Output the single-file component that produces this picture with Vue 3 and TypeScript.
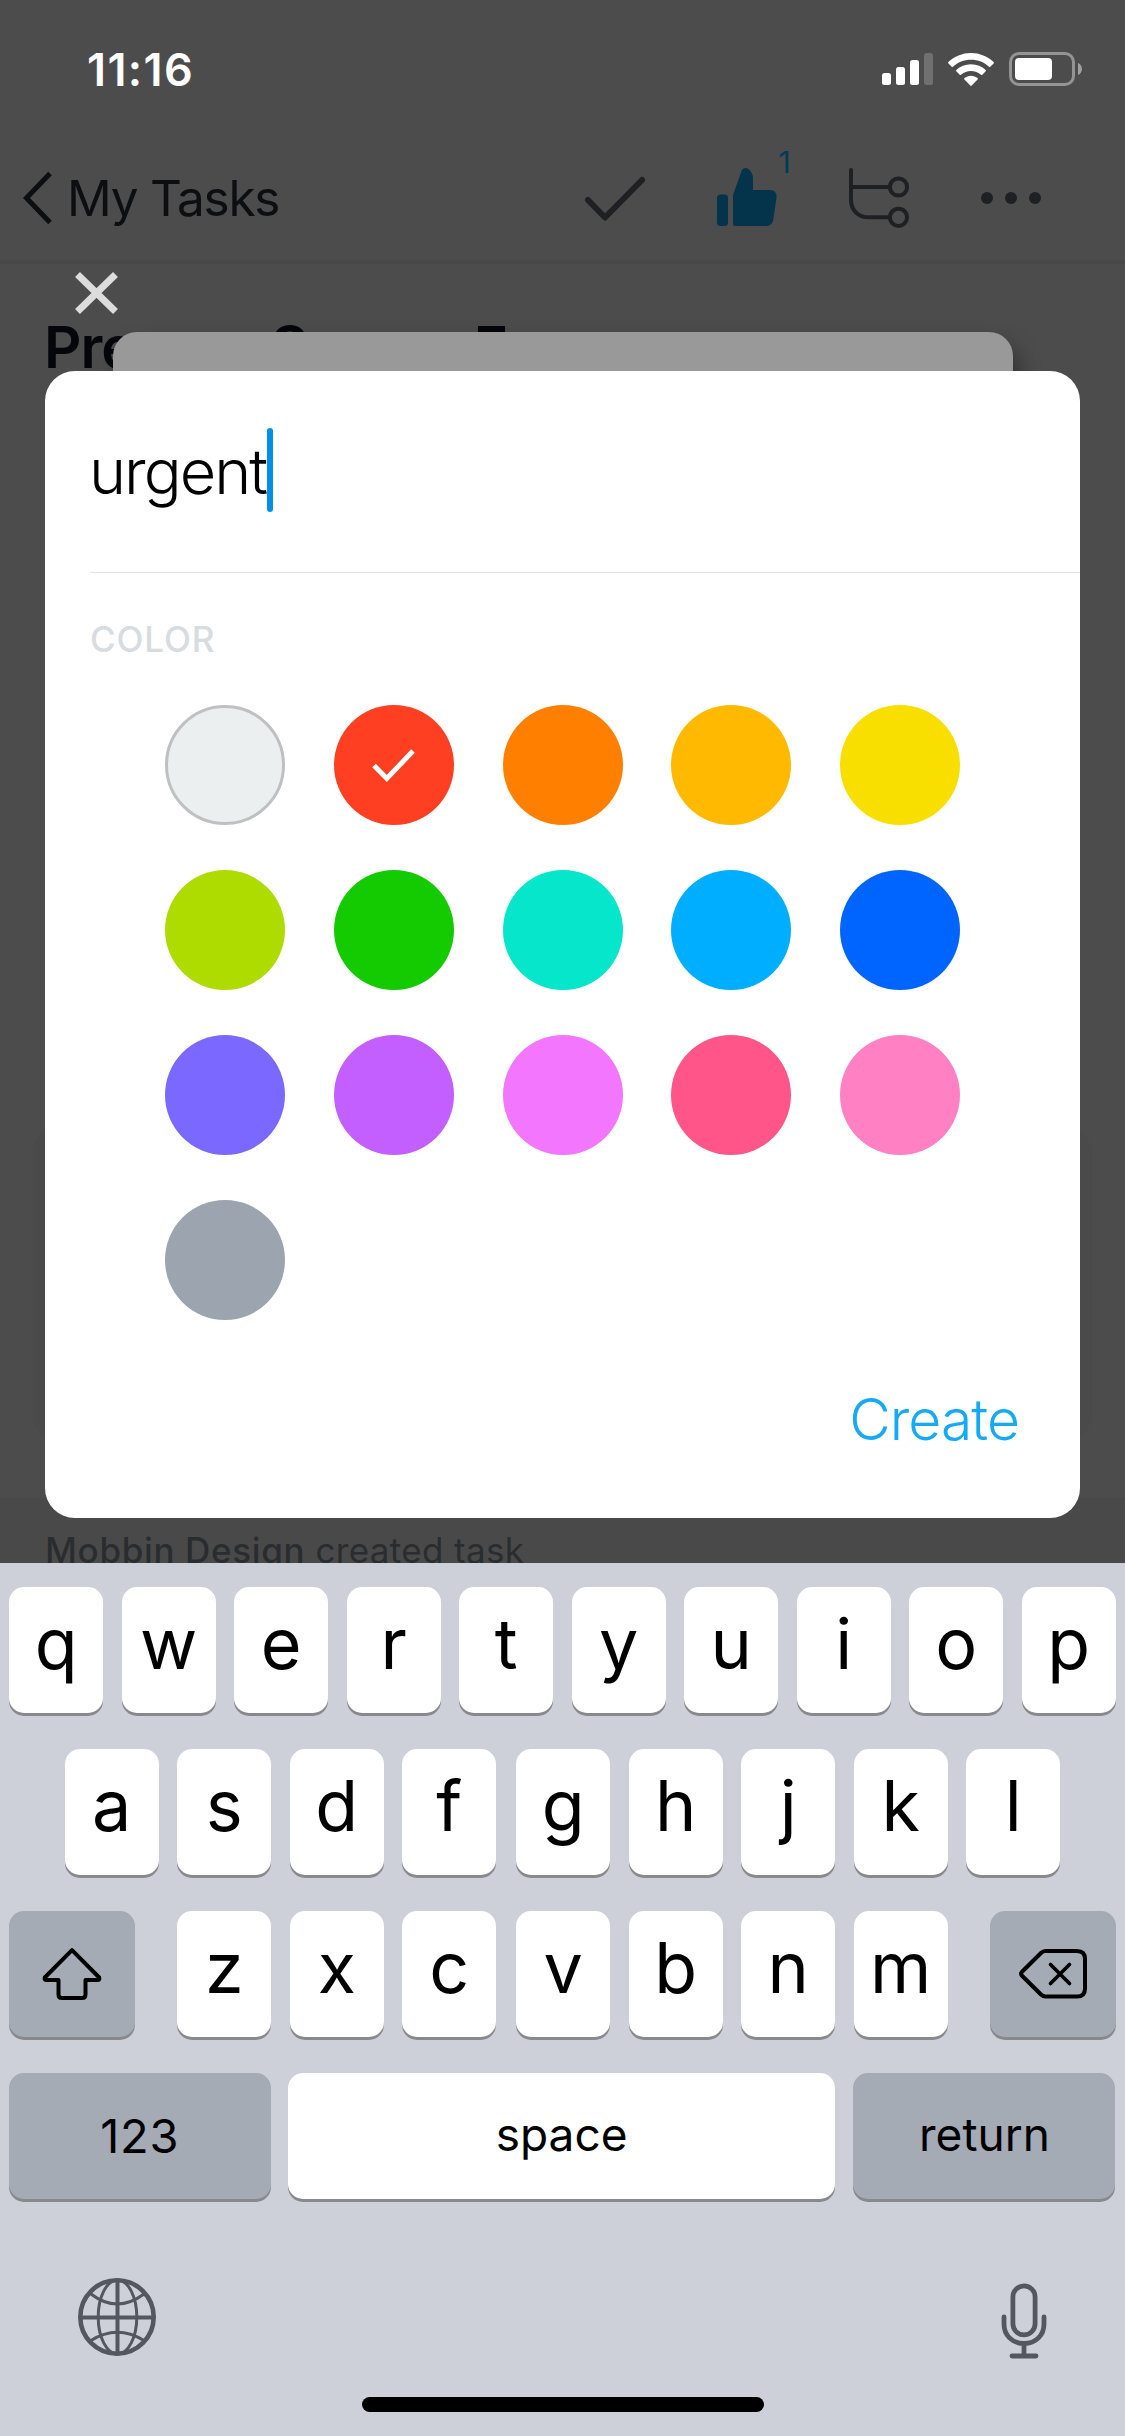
<script setup lang="ts">
interface Swatch {
  name: string
  color: string
  outlined?: boolean
}

const swatches: Swatch[] = [
  { name: 'none', color: '#ebeff0', outlined: true },
  { name: 'red', color: '#ff3f21' },
  { name: 'orange', color: '#ff8000' },
  { name: 'amber', color: '#ffba00' },
  { name: 'yellow', color: '#f8df00' },
  { name: 'lime', color: '#aedb00' },
  { name: 'green', color: '#13cb00' },
  { name: 'teal', color: '#06e6ca' },
  { name: 'sky', color: '#00aeff' },
  { name: 'blue', color: '#0064ff' },
  { name: 'indigo', color: '#7a68ff' },
  { name: 'purple', color: '#c35fff' },
  { name: 'orchid', color: '#f376ff' },
  { name: 'rose', color: '#ff5588' },
  { name: 'pink', color: '#ff80c3' },
  { name: 'gray', color: '#9ca4b0' },
]
const selected = 'red'

const topRow = 'qwertyuiop'.split('')
const homeRow = 'asdfghjkl'.split('')
const bottomRow = 'zxcvbnm'.split('')
</script>

<template>
  <div class="screen">
    <div class="page">
      <header class="status">
        <span class="time">11:16</span>
        <svg class="signal" width="51" height="32" viewBox="0 0 51 32" fill="#fff">
          <rect x="0" y="20" width="9" height="12" rx="2.5" />
          <rect x="14" y="14" width="9" height="18" rx="2.5" />
          <rect x="28" y="7" width="9" height="25" rx="2.5" />
          <rect x="42" y="0" width="9" height="32" rx="2.5" fill="#707070" />
        </svg>
        <svg class="wifi" width="46" height="33" viewBox="0 0 46 33" fill="#fff">
          <path d="M23 0C31.800 0 39.800 3.400 45.600 9.100Q46.200 9.700 45.600 10.400L42.300 13.800Q41.700 14.400 41 13.800C36.300 9.300 30 6.700 23 6.700S9.700 9.300 5 13.800Q4.300 14.400 3.700 13.800L.4 10.400Q-.2 9.700 .4 9.100C6.200 3.400 14.200 0 23 0Z" />
          <path d="M23 11.200C28.700 11.200 33.800 13.300 37.700 16.900Q38.300 17.500 37.700 18.200L34.300 21.700Q33.700 22.300 33 21.700C30.300 19.300 26.800 17.900 23 17.900S15.700 19.300 13 21.700Q12.300 22.300 11.700 21.700L8.300 18.200Q7.700 17.500 8.300 16.900C12.200 13.300 17.300 11.200 23 11.200Z" />
          <path d="M23 22.700C25.500 22.700 27.900 23.600 29.600 25.100Q30.300 25.800 29.600 26.500L23.700 32.600Q23 33.300 22.300 32.600L16.400 26.500Q15.700 25.800 16.400 25.100C18.100 23.600 20.500 22.700 23 22.700Z" />
        </svg>
        <svg class="battery" width="74" height="34" viewBox="0 0 74 34">
          <rect x="1.500" y="1.500" width="63" height="31" rx="8.500" fill="none" stroke="#949494" stroke-width="3" />
          <rect x="6" y="6" width="37" height="22" rx="4" fill="#fff" />
          <path d="M69 11C74.300 13 74.300 21 69 23Z" fill="#a0a0a0" />
        </svg>
      </header>

      <nav class="nav">
        <svg class="back" width="30" height="54" viewBox="0 0 30 54" fill="none" stroke="#0d0e12" stroke-width="5">
          <path d="M27 2.500 3.500 27 27 51.500" />
        </svg>
        <span class="back-label">My Tasks</span>
        <div class="actions">
          <svg width="62" height="60" viewBox="0 0 62 60" fill="none" stroke="#1f2024" stroke-width="6" stroke-linecap="round" stroke-linejoin="round">
            <path d="M4 32 21 49.500 58 12" />
          </svg>
          <div class="like">
            <svg width="62" height="60" viewBox="0 0 62 60" fill="#03344b">
              <rect x="1" y="26.500" width="11" height="31.500" rx="3.500" />
              <path d="M17 56V27L25.500 3C26.500 .6 28.500 0 30 0C33.500 .4 37 5.500 37 10V22H54.500C58.500 22 61 25.500 60.500 29.500L57.300 51.500C56.700 55.600 54.500 58 50 58H19Q17 58 17 56Z" />
            </svg>
            <span class="like-count">1</span>
          </div>
          <svg width="62" height="60" viewBox="0 0 62 60" fill="none" stroke="#1f2024" stroke-width="4" stroke-linecap="round">
            <path d="M3 2V32C3 42.500 10.500 49.300 20.500 49.300H41M3 19H41" />
            <circle cx="50.500" cy="19" r="8.600" />
            <circle cx="50.500" cy="49.300" r="8.600" />
          </svg>
          <svg width="62" height="60" viewBox="0 0 62 60" fill="#1f2024">
            <circle cx="7" cy="30" r="6" />
            <circle cx="31" cy="30" r="6" />
            <circle cx="55" cy="30" r="6" />
          </svg>
        </div>
      </nav>

      <main class="task">
        <h1 class="title"><span class="w1">Prepare</span><span class="w2">Survey</span><span>Form</span></h1>
        <div class="task-card"></div>
      </main>
      <section class="activity"><b>Mobbin Design</b> created task</section>
    </div>

    <div class="overlay">
      <svg class="close" width="43" height="42" viewBox="0 0 43 42" fill="none" stroke="#dcdcdc" stroke-width="7">
        <path d="M2.500 2.500 40.500 39.500M40.500 2.500 2.500 39.500" />
      </svg>
      <div class="sheet-behind"></div>
      <section class="dialog">
        <div class="field">
          <span class="value">urgent</span><i class="caret"></i>
        </div>
        <div class="label">COLOR</div>
        <div class="swatches">
          <div
            v-for="s in swatches"
            :key="s.name"
            class="swatch"
            :class="{ outlined: s.outlined }"
            :style="{ backgroundColor: s.color }"
          >
            <svg v-if="s.name === selected" width="44" height="36" viewBox="0 0 44 36" fill="none" stroke="#fff" stroke-width="5">
              <path d="M2 18.500 14.800 31.500 41 4" />
            </svg>
          </div>
        </div>
        <div class="footer"><span class="create">Create</span></div>
      </section>
    </div>

    <div class="keyboard">
      <div class="row">
        <div v-for="k in topRow" :key="k" class="key letter">{{ k }}</div>
      </div>
      <div class="row">
        <div v-for="k in homeRow" :key="k" class="key letter" :class="{ nudge: k === 'g' }">{{ k }}</div>
      </div>
      <div class="row wide">
        <div class="key dark mod">
          <svg width="60" height="54" viewBox="0 0 60 54" fill="none" stroke="#000" stroke-width="4" stroke-linejoin="round">
            <path d="M30 3.200 57.200 30.500Q58 33 55.500 33H43.500V47.500Q43.500 51 40 51H20Q16.500 51 16.500 47.500V33H4.500Q2 33 2.800 30.500Z" />
          </svg>
        </div>
        <div class="letters">
          <div v-for="k in bottomRow" :key="k" class="key letter" :class="{ nudge: k === 'v' }">{{ k }}</div>
        </div>
        <div class="key dark mod">
          <svg width="70" height="52" viewBox="0 0 70 52" fill="none" stroke="#000" stroke-width="4" stroke-linecap="round" stroke-linejoin="round">
            <path d="M27.500 3H59Q67 3 67 11V40.500Q67 48.500 59 48.500H27.500Q25 48.500 23 46.500L3.800 27.500Q2.300 25.700 3.800 24L23 5Q25 3 27.500 3Z" />
            <path d="M32.500 16.500 51.500 35.500M51.500 16.500 32.500 35.500" stroke-width="3.600" />
          </svg>
        </div>
      </div>
      <div class="row wide last">
        <div class="key dark side digits">123</div>
        <div class="key space">space</div>
        <div class="key dark side">return</div>
      </div>
      <div class="tools">
        <svg width="78" height="78" viewBox="0 0 78 78" fill="none" stroke="#53575f">
          <circle cx="39" cy="39" r="36.700" stroke-width="4.600" />
          <path d="M39.500 3V75M3 39.500H75" stroke-width="4" />
          <ellipse cx="39.500" cy="39" rx="19.300" ry="37" stroke-width="3" />
          <path d="M13 16Q39 36 66 16M13 62.500Q39 46 66 62.500" stroke-width="3" />
        </svg>
        <svg class="mic" width="46" height="76" viewBox="0 0 46 76" fill="none" stroke="#53575f" stroke-width="4.800" stroke-linecap="round">
          <rect x="11.900" y="2.900" width="22.200" height="49" rx="11.100" />
          <path d="M3 34V41C3 52 11 60.500 23 60.500S43 52 43 41V34M23 60.500V73M11 73H35" />
        </svg>
      </div>
      <div class="home"></div>
    </div>
  </div>
</template>

<style>
body {
  margin: 0;
}
</style>

<style scoped>
.screen {
  position: relative;
  width: 1125px;
  height: 2436px;
  overflow: hidden;
  background: #4c4c4c;
  font-family: Inter, 'Liberation Sans', sans-serif;
  box-sizing: border-box;
}
.screen * {
  box-sizing: border-box;
}
svg {
  display: block;
  flex: none;
  overflow: visible;
}
.page {
  display: flex;
  flex-direction: column;
}
.status {
  display: flex;
  align-items: center;
  height: 138px;
  padding: 0 42px 0 87px;
}
.time {
  color: #fff;
  font-size: 45px;
  font-weight: 600;
  letter-spacing: 1.400px;
}
.signal {
  margin-left: auto;
}
.wifi {
  margin-left: 15px;
}
.battery {
  margin-left: 15px;
}
.nav {
  display: flex;
  align-items: center;
  height: 126px;
  padding: 0 83px 2px 23px;
  border-bottom: 4px solid #484848;
}
.back-label {
  margin-left: 14px;
  color: #0d0e12;
  font-size: 49.500px;
  letter-spacing: -1.250px;
  white-space: nowrap;
}
.actions {
  display: flex;
  gap: 70px;
  margin-left: auto;
}
.like {
  position: relative;
}
.like-count {
  position: absolute;
  left: 62.500px;
  top: -24px;
  color: #033a55;
  font-size: 30px;
  line-height: 36px;
}
.task {
  height: 1234px;
  padding: 47px 0 0 44px;
}
.title {
  display: flex;
  margin: 0;
  color: #05060b;
  font-size: 58px;
  font-weight: 600;
  letter-spacing: -0.900px;
  line-height: 72px;
}
.w1 {
  margin-right: 13.500px;
}
.w2 {
  margin-right: 11px;
}
.task-card {
  width: 1059px;
  height: 318px;
  margin: 742px 0 0 -11px;
  border-radius: 30px;
  background: #4a4a4a;
}
.activity {
  height: 938px;
  padding: 30px 0 0 45px;
  background: #494949;
  color: #292d30;
  font-size: 35px;
  letter-spacing: 0.350px;
  line-height: 44px;
}
.activity b {
  font-weight: 500;
  letter-spacing: 0.650px;
}
.overlay {
  position: absolute;
  inset: 0;
  display: flex;
  flex-direction: column;
  padding: 272px 45px 0;
}
.close {
  margin-left: 29.500px;
}
.sheet-behind {
  position: absolute;
  left: 113px;
  top: 332px;
  width: 900px;
  height: 500px;
  border-radius: 24px;
  background: #999;
  box-shadow: 6px 14px 22px rgba(0, 0, 0, 0.38);
}
.dialog {
  position: relative;
  height: 1147px;
  margin-top: 57px;
  border-radius: 30px;
  background: #fff;
}
.field {
  display: flex;
  align-items: center;
  height: 202px;
  margin-left: 45px;
  padding-bottom: 3px;
  border-bottom: 1px solid #dfe3e4;
}
.value {
  margin-left: -1px;
  padding-top: 1px;
  color: #000;
  font-size: 63px;
  font-weight: 325;
  letter-spacing: -2px;
}
.caret {
  width: 6px;
  height: 84px;
  margin-left: 1px;
  border-radius: 3px;
  background: #028fe8;
}
.label {
  margin: 44px 0 0 45px;
  color: #d6dce0;
  font-size: 35px;
  font-weight: 500;
  letter-spacing: 0.900px;
  line-height: 44px;
}
.swatches {
  display: grid;
  grid-template-columns: repeat(5, 120px);
  justify-content: space-between;
  row-gap: 45px;
  margin: 44px 120px 0;
}
.swatch {
  display: flex;
  align-items: center;
  justify-content: center;
  height: 120px;
  border-radius: 50%;
}
.swatch.outlined {
  border: 3px solid #bfc0c1;
}
.footer {
  display: flex;
  justify-content: flex-end;
  margin-top: 65px;
  padding-right: 61px;
}
.create {
  color: #14aaf5;
  font-size: 57px;
  font-weight: 310;
  letter-spacing: -0.950px;
  line-height: 70px;
}
.keyboard {
  position: absolute;
  left: 0;
  right: 0;
  bottom: 0;
  display: flex;
  flex-direction: column;
  height: 873px;
  padding-top: 24px;
  background: #cdd0d9;
  color: #000;
}
.row {
  display: flex;
  justify-content: center;
  gap: 18.500px;
  margin-bottom: 36px;
}
.row.wide {
  justify-content: space-between;
  padding: 0 9px;
  gap: 18px;
}
.row.last {
  padding-right: 9.500px;
  gap: 0;
}
.letters {
  display: flex;
  gap: 18.500px;
}
.key {
  display: flex;
  align-items: center;
  justify-content: center;
  height: 126px;
  border-radius: 15px;
  background: #fff;
  box-shadow: 0 3px 0 #88898c;
  font-size: 46px;
  line-height: 122px;
}
.letter {
  width: 94px;
  padding-bottom: 12px;
  font-size: 70px;
  font-weight: 380;
  line-height: 1;
}
.nudge {
  margin-left: 1.500px;
}
.dark {
  background: #a4abb5;
}
.mod {
  width: 126px;
}
.side {
  width: 262px;
  padding-bottom: 5px;
}
.side.digits {
  width: 261.500px;
  padding-bottom: 1px;
  font-size: 47px;
  letter-spacing: 0.800px;
}
.space {
  width: 547px;
  margin-left: -0.800px;
  padding-bottom: 5px;
}
.tools {
  display: flex;
  justify-content: space-between;
  margin-top: 43px;
  padding: 0 78px;
}
.mic {
  margin-top: 5px;
}
.home {
  width: 402px;
  height: 15px;
  margin: 38px auto 0;
  border-radius: 8px;
  background: #000;
}
</style>
